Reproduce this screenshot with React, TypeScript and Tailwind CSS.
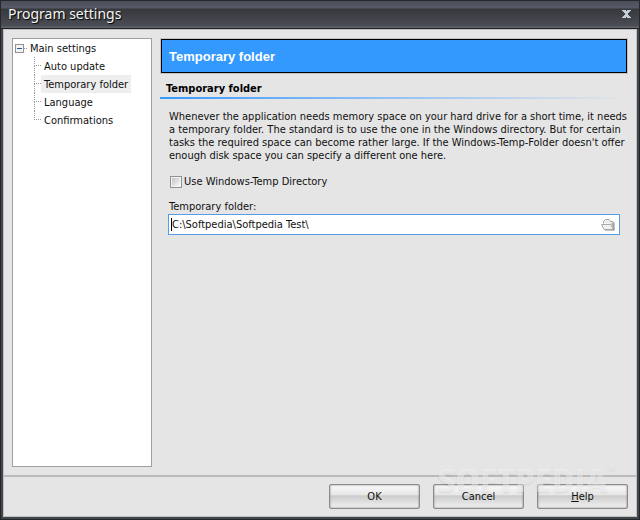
import React from "react";

const sections = [
  { id: 1, title: "Auto update", active: false },
  { id: 2, title: "Temporary folder", active: true },
  { id: 3, title: "Language", active: false },
  { id: 4, title: "Confirmations", active: false },
];

const actions = [
  { id: 1, key: "", rest: "OK" },
  { id: 2, key: "", rest: "Cancel" },
  { id: 3, key: "H", rest: "elp" },
];

const FolderIcon = () => (
  <svg width="14" height="12" viewBox="0 0 14 12" aria-hidden="true">
    <path d="M12 3.5H13.5V11.5H4V10.5H12Z" fill="#858785" />
    <path d="M2.5 4.5V2.5L4.5 .5H8L9.5 2.5H12V5" fill="#eceeec" stroke="#a4a6a4" />
    <path d="M.5 5.5H10L12 10.5H3Z" fill="#f0f2f0" stroke="#aaacaa" />
    <path d="M10 4.5L12.5 10.5V3.5Z" fill="#b4b6b4" />
  </svg>
);

const Sidebar = () => (
  <nav className="w-[140px] shrink-0 border border-[#9f9f9f] bg-white pl-[2px]">
    <div className="flex h-[18px] items-center">
      <button aria-label="Collapse" className="flex size-[9px] items-center justify-center border border-[#919191] bg-[#f4f4f4]">
        <span className="h-px w-[5px] bg-[#28569b]" />
      </button>
      <span className="w-[3px] border-t border-dotted border-[#999]" />
      <span className="ml-[3px] pt-[2px]">Main settings</span>
    </div>
    <ul className="ml-[19px]">
      {sections.map((section) => (
        <li key={section.id} className="group flex h-[18px] items-center">
          <span className="flex h-full w-[7px] flex-col">
            <span className="h-[9px] border-b border-l border-dotted border-[#999]" />
            <span className="flex-1 border-l border-dotted border-[#999] group-last:border-transparent" />
          </span>
          <a
            href="#"
            className={
              section.active
                ? "flex h-full items-center bg-[#eeeeee] px-[3px] pt-[2px]"
                : "flex h-full items-center px-[3px] pt-[2px]"
            }
          >
            {section.title}
          </a>
        </li>
      ))}
    </ul>
  </nav>
);

const Settings = () => (
  <main className="min-w-0 flex-1">
    <h1 className="flex h-9 items-center border border-[#c3c3c3] font-['Liberation_Sans',sans-serif] text-[13px] font-bold text-white">
      <span className="flex h-full w-full items-center border border-black bg-[#3399ff] pl-[7px] pt-[2px]">Temporary folder</span>
    </h1>
    <h2 className="mt-[7px] pl-[6px] text-[11px] font-bold leading-[16px] text-black">
      Temporary folder
    </h2>
    <div className="h-[2px] bg-linear-to-r from-[#3399ff] to-[#e5e5e5]" />
    <div className="pl-[8px] pt-[11px]">
      <p className="pl-px leading-[13px]">
        Whenever the application needs memory space on your hard drive for a short time, it needs
        <br />a temporary folder. The standard is to use the one in the Windows directory. But for certain
        <br />
        tasks the required space can become rather large. If the Windows-Temp-Folder doesn't offer
        <br />
        enough disk space you can specify a different one here.
      </p>
      <label className="mt-[13px] flex h-[13px] items-center gap-[2px] pl-[2px]">
        <input
          type="checkbox"
          className="size-3 appearance-none border border-[#919191] bg-linear-to-br from-[#bebebe] to-white outline-1 -outline-offset-2 outline-[#f4f4f4]"
        />
        <span className="pt-[2px]">Use Windows-Temp Directory</span>
      </label>
      <label htmlFor="folder" className="mt-[12px] block pl-px leading-[13px]">
        Temporary folder:
      </label>
      <div className="mr-2 mt-px flex h-[21px] items-center border border-[#569de5] bg-white pr-1">
        <span className="ml-[2px] h-[13px] w-px bg-black" />
        <input id="folder" type="text" defaultValue="C:\Softpedia\Softpedia Test\" className="min-w-0 flex-1 pt-[2px] outline-none" />
        <button aria-label="Browse">
          <FolderIcon />
        </button>
      </div>
    </div>
  </main>
);

const App = () => {
  return (
    <div className="relative flex min-h-screen flex-col border border-[#24272b] bg-[#42454b] px-[2px] pb-[2px] font-['DejaVu_Sans_Condensed','DejaVu_Sans',sans-serif] text-[11px] text-[#101010]">
      {/* Title bar */}
      <header className="-mx-[2px] flex h-7 items-center justify-between border-b border-[#202226] bg-[linear-gradient(#4c4f5a_0,#565966_7px,#36383b_8px,#4a4d55_25px,#60636e_26px)] pl-[7px] pr-2 text-[#f4f4f4]">
        <span className="-mt-[2px] font-['Noto_Sans',sans-serif] text-[14px] [text-shadow:1px_1px_1px_#000]">Program settings</span>
        <button aria-label="Close" className="-mt-[2px] text-[#c4ced8]">
          <svg width="9" height="8" viewBox="0 0 9 8" shapeRendering="crispEdges" fill="currentColor">
            <path d="M0 0H4V1H5V0H9V1H8V2H7V3H6V5H7V6H8V7H9V8H5V7H4V8H0V7H1V6H2V5H3V3H2V2H1V1H0Z" />
          </svg>
        </button>
      </header>

      <div className="flex flex-1 flex-col border border-[#bfc2c0] bg-[#e5e5e5]">
        <div className="flex flex-1 gap-2 p-2">
          <Sidebar />
          <Settings />
        </div>
        {/* Buttons */}
        <footer className="flex justify-end gap-[13px] border-t-2 border-[#bbbbbb] px-2 py-[7px]">
          {actions.map((action) => (
            <button
              key={action.id}
              className="h-[25px] w-[91px] rounded-[2px] border border-[#8c8c8c] bg-[linear-gradient(#fafafa,#e6e6e6_45%,#cbcbcb_46%,#f2f2f2)] pt-px shadow-[inset_0_0_2px_#777]"
            >
              <u>{action.key}</u>
              {action.rest}
            </button>
          ))}
        </footer>
      </div>

      {/* Watermark */}
      <div className="pointer-events-none absolute bottom-[15px] right-[23px] flex items-start font-['Open_Sans',sans-serif] text-[31px] font-extrabold leading-[48px] text-white/45 [text-shadow:0_1px_2px_rgba(0,0,0,0.09)]">
        SOFTPEDIA<span className="text-[10px] leading-[20px]">®</span>
      </div>
    </div>
  );
};

export default App;
